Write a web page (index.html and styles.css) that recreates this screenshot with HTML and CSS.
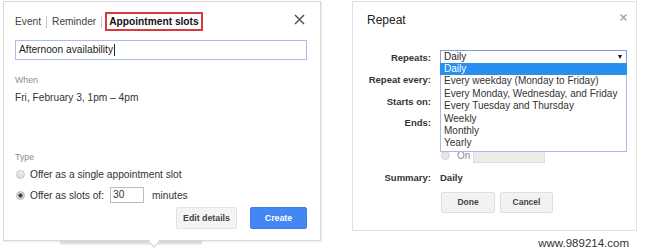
FILE: index.html
```html
<!DOCTYPE html>
<html>
<head>
<meta charset="utf-8">
<link rel="stylesheet" href="styles.css">
</head>
<body>
<div class="left">
  <div class="tabs">
    <span class="tab">Event</span>
    <span class="sep"></span>
    <span class="tab">Reminder</span>
    <span class="sep"></span>
    <span class="tab active">Appointment slots</span>
    <svg class="close" width="11" height="11" viewBox="0 0 11 11"><path d="M1 1L10 10M10 1L1 10" stroke="#555" stroke-width="1.5" fill="none"/></svg>
  </div>
  <div class="title-input">Afternoon availability<span class="caret"></span></div>
  <div class="label when">When</div>
  <div class="date">Fri, February 3, 1pm – 4pm</div>
  <div class="label type">Type</div>
  <div class="radio-row r1"><span class="radio"></span><span>Offer as a single appointment slot</span></div>
  <div class="radio-row r2"><span class="radio checked"></span><span>Offer as slots of:</span><span class="mins">30</span><span class="minutes">minutes</span></div>
  <div class="actions">
    <span class="btn gray">Edit details</span>
    <span class="btn blue">Create</span>
  </div>
  <div class="under-shadow"></div>
  <div class="arrow"></div>
</div>

<div class="right-col">
  <div class="right">
    <div class="head">
      <span class="rtitle">Repeat</span>
      <svg class="rclose" width="7" height="7" viewBox="0 0 7 7"><path d="M0.5 0.5L6.5 6.5M6.5 0.5L0.5 6.5" stroke="#9a9a9a" stroke-width="1.1" fill="none"/></svg>
    </div>
    <div class="form">
      <div class="row">
        <span class="flabel">Repeats:</span>
        <div class="field">
          <div class="select"><span>Daily</span><span class="tri"></span></div>
          <div class="list">
            <div class="opt sel">Daily</div>
            <div class="opt">Every weekday (Monday to Friday)</div>
            <div class="opt">Every Monday, Wednesday, and Friday</div>
            <div class="opt">Every Tuesday and Thursday</div>
            <div class="opt">Weekly</div>
            <div class="opt">Monthly</div>
            <div class="opt">Yearly</div>
          </div>
        </div>
      </div>
      <div class="row">
        <span class="flabel">Repeat every:</span>
        <div class="field"></div>
      </div>
      <div class="row">
        <span class="flabel">Starts on:</span>
        <div class="field"></div>
      </div>
      <div class="row ends">
        <span class="flabel">Ends:</span>
        <div class="field col">
          <div class="eline"><span class="radio dis"></span></div>
          <div class="eline"><span class="radio dis"></span></div>
          <div class="eline"><span class="radio dis"></span><span class="on">On</span><span class="onbox"></span></div>
        </div>
      </div>
      <div class="row summary">
        <span class="flabel">Summary:</span>
        <div class="field bold">Daily</div>
      </div>
      <div class="row buttons">
        <span class="flabel"></span>
        <div class="field btns">
          <span class="btn2">Done</span>
          <span class="btn2">Cancel</span>
        </div>
      </div>
    </div>
  </div>
  <div class="watermark">www.989214.com</div>
</div>
</body>
</html>
```

FILE: styles.css
```css
* { box-sizing: border-box; }
html, body { margin: 0; padding: 0; }
body {
  width: 645px;
  height: 250px;
  overflow: hidden;
  background: #fff;
  display: flex;
  align-items: flex-start;
  font-family: "Liberation Sans", Arial, sans-serif;
  color: #333;
}

/* ---------- left dialog ---------- */
.left {
  position: relative;
  margin-left: 3px;
  margin-top: 1px;
  width: 318px;
  height: 240px;
  border: 1px solid #d8d8d8;
  box-shadow: 1px 1px 2px rgba(0,0,0,0.08);
  padding: 10px 13px 0 11px;
  display: flex;
  flex-direction: column;
  background: #fff;
}
.tabs {
  display: flex;
  align-items: center;
  height: 19px;
  font-size: 10.2px;
  color: #444;
}
.sep {
  width: 1px;
  height: 12px;
  background: #c8c8c8;
  margin: 0 5px;
}
.tab.active {
  margin-left: -2px;
  border: 2px solid #d63a3f;
  padding: 0 2px;
  height: 19px;
  line-height: 15px;
  font-weight: bold;
  color: #111;
}
.close {
  margin-left: auto;
  margin-right: 2px;
  margin-top: -4px;
}
.title-input {
  margin-top: 9px;
  height: 20px;
  border: 1px solid #a6c0ea;
  padding-left: 3px;
  font-size: 10.2px;
  line-height: 18px;
  color: #222;
  display: flex;
  align-items: center;
}
.caret {
  display: inline-block;
  width: 1px;
  height: 12px;
  background: #222;
  margin-left: 1px;
}
.label {
  font-size: 8.8px;
  line-height: 14px;
  color: #8c8c8c;
}
.when { margin-top: 13px; }
.date {
  margin-top: 3px;
  font-size: 10.2px;
  line-height: 16px;
  color: #333;
}
.type { margin-top: 44px; }
.radio-row {
  display: flex;
  align-items: center;
  font-size: 10.2px;
  color: #333;
}
.r1 { margin-top: 1px; height: 18px; }
.r2 { margin-top: 4px; height: 16px; }
.radio {
  display: inline-block;
  width: 9px;
  height: 9px;
  border-radius: 50%;
  border: 1px solid #c4c4c4;
  background: linear-gradient(#f2f2f2, #d9d9d9);
  margin-left: 1px;
  margin-right: 5px;
  flex: none;
}
.radio.checked {
  background: radial-gradient(circle, #444 0 1.8px, #dadada 2.4px);
  border-color: #b8b8b8;
}
.mins {
  margin-left: 6px;
  width: 34px;
  height: 16px;
  border: 1px solid #bdbdbd;
  padding-left: 2px;
  line-height: 14px;
}
.minutes { margin-left: 8px; }
.actions {
  margin-top: 4px;
  display: flex;
  justify-content: flex-end;
  gap: 13px;
}
.btn {
  height: 22px;
  line-height: 20px;
  text-align: center;
  font-size: 8.8px;
  font-weight: bold;
  border-radius: 2px;
}
.btn.gray {
  width: 61px;
  background: #f4f4f4;
  border: 1px solid #e2e2e2;
  color: #444;
}
.btn.blue {
  width: 57px;
  background: #4487f4;
  border: 1px solid #3e7fe8;
  color: #fff;
}
.under-shadow {
  position: absolute;
  left: 56px;
  bottom: -5px;
  width: 142px;
  height: 4px;
  background: linear-gradient(#cfcfcf, #f2f2f2);
}
.arrow {
  position: absolute;
  left: 146px;
  bottom: -6px;
  width: 8px;
  height: 8px;
  background: #fff;
  border-right: 1px solid #d0d0d0;
  border-bottom: 1px solid #d0d0d0;
  transform: rotate(45deg);
}

/* ---------- right dialog ---------- */
.right-col {
  margin-left: 31px;
  margin-top: 1px;
  display: flex;
  flex-direction: column;
}
.right {
  width: 285px;
  height: 230px;
  border: 1px solid #e2e2e2;
  padding-top: 9px;
  background: #fff;
}
.head {
  display: flex;
  justify-content: space-between;
  align-items: flex-start;
  padding-left: 14px;
  padding-right: 9px;
}
.rtitle {
  font-size: 12px;
  line-height: 18px;
  color: #222;
}
.rclose { margin-top: 3px; }
.form {
  margin-top: 17px;
  display: flex;
  flex-direction: column;
}
.row {
  display: flex;
  align-items: center;
  height: 22px;
}
.flabel {
  width: 78px;
  flex: none;
  text-align: right;
  font-size: 9.5px;
  font-weight: bold;
  color: #333;
}
.field {
  position: relative;
  margin-left: 9px;
  font-size: 10px;
  color: #333;
}
.select {
  width: 187px;
  height: 14px;
  border: 1px solid #7f9fd6;
  padding-left: 3px;
  font-size: 10px;
  line-height: 12px;
  display: flex;
  align-items: center;
  justify-content: space-between;
  padding-right: 4px;
  color: #222;
}
.tri {
  width: 0;
  height: 0;
  border-left: 2.5px solid transparent;
  border-right: 2.5px solid transparent;
  border-top: 4px solid #111;
}
.list {
  position: absolute;
  top: 13px;
  left: 0;
  width: 187px;
  background: #fff;
  border: 1px solid #a9bce6;
  border-top: none;
  padding-bottom: 1px;
  z-index: 5;
}
.opt {
  height: 12.4px;
  line-height: 12.4px;
  padding-left: 3px;
  font-size: 10px;
  color: #333;
  white-space: nowrap;
}
.opt.sel {
  background: #2a8df0;
  color: #fff;
  margin: 0 -1px;
  padding-left: 4px;
}
.row.ends {
  height: 51px;
  align-items: flex-start;
}
.row.ends .flabel { line-height: 22px; }
.field.col {
  display: flex;
  flex-direction: column;
  padding-top: 3px;
}
.eline {
  height: 16px;
  display: flex;
  align-items: center;
  color: #888;
}
.radio.dis {
  margin-left: 1px;
  margin-right: 7px;
  background: #e6e6e6;
  border-color: #d4d4d4;
}
.on { color: #8a8a8a; }
.onbox {
  margin-left: 3px;
  width: 72px;
  height: 12px;
  margin-top: 4px;
  background: #ecebe6;
  border: 1px solid #e0dfda;
}
.row.summary {
  margin-top: 6px;
  height: 16px;
}
.field.bold {
  font-size: 9.5px;
  font-weight: bold;
}
.row.buttons {
  margin-top: 7px;
  height: 21px;
}
.btns {
  display: flex;
  gap: 5px;
  margin-left: 10px;
}
.btn2 {
  height: 21px;
  width: 54px;
  line-height: 19px;
  text-align: center;
  font-size: 8.5px;
  font-weight: bold;
  color: #444;
  background: #f2f2f2;
  border: 1px solid #dedede;
  border-radius: 2px;
}
.btn2 + .btn2 { width: 53px; }
.watermark {
  margin-top: 5px;
  text-align: right;
  padding-right: 8px;
  font-size: 11.5px;
  line-height: 14px;
  color: #333;
}
```
